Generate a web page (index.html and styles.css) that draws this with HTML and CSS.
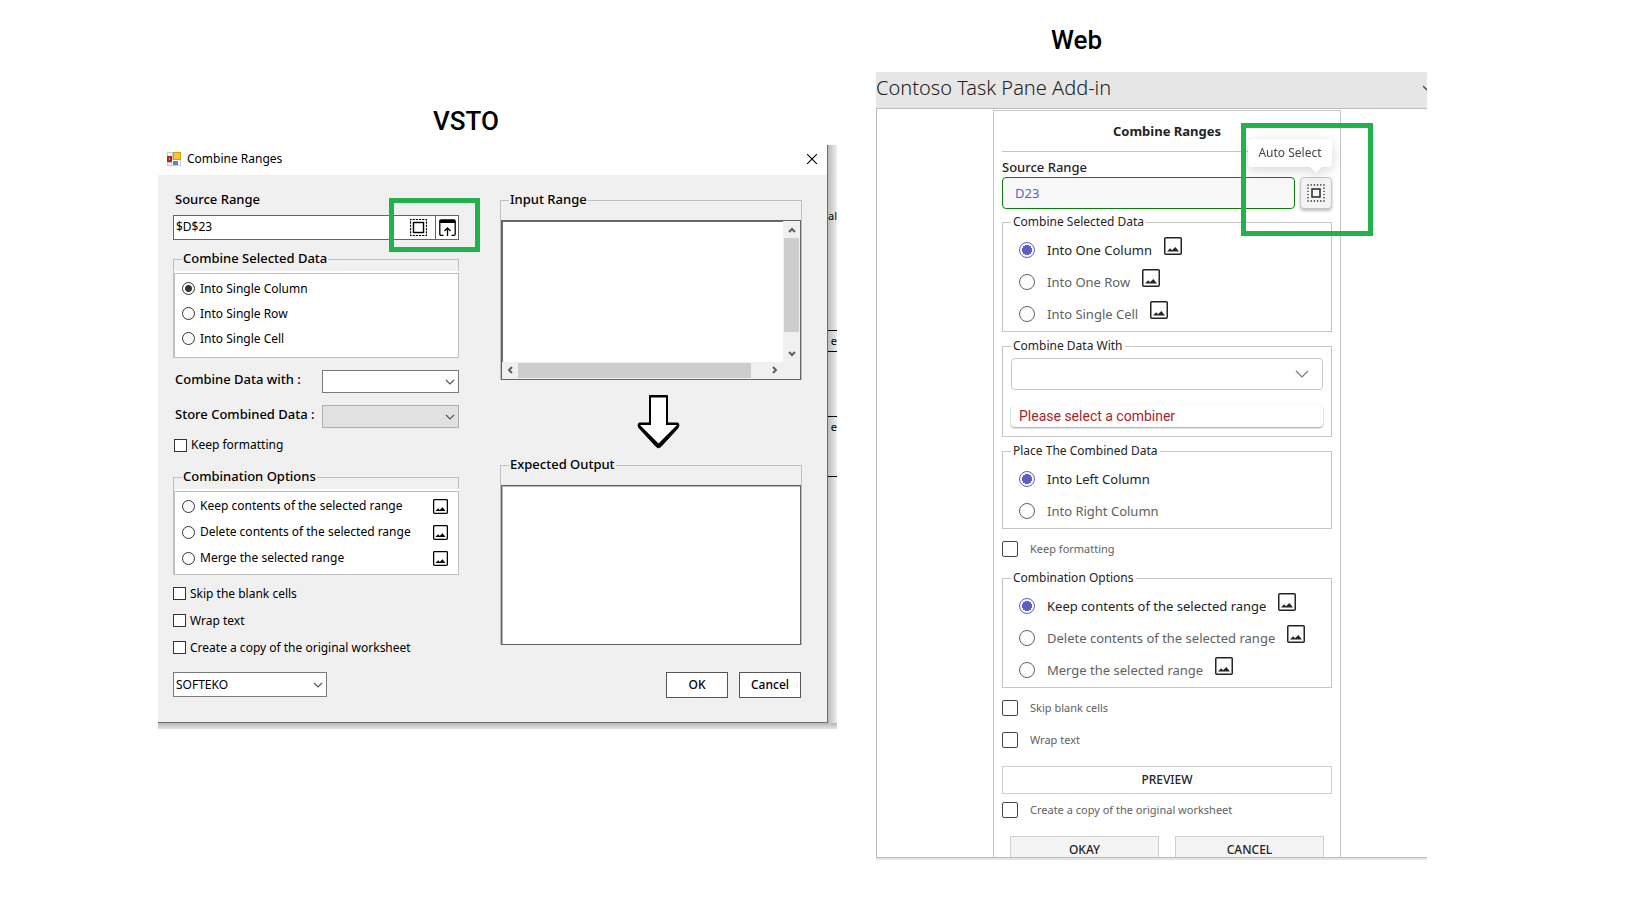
FILE: index.html
```html
<!DOCTYPE html>
<html lang="en">
<head>
<meta charset="utf-8">
<title>Combine Ranges</title>
<link rel="stylesheet" href="styles.css">
</head>
<body>
<svg width="0" height="0" class="defs" aria-hidden="true">
  <symbol id="picture" viewBox="0 0 18 18">
    <rect x="0.75" y="0.75" width="16.5" height="16.5" rx="1" fill="#fff" stroke="currentColor" stroke-width="1.5"/>
    <path d="M3 14.500 6.200 11.200 8 13.200 11.400 10 15 14.500Z" fill="currentColor"/>
  </symbol>
  <symbol id="chevron" viewBox="0 0 10 6">
    <path d="M1 1 5 5 9 1" fill="none" stroke="currentColor" stroke-width="1.2"/>
  </symbol>
  <symbol id="arrowhead" viewBox="0 0 8 6">
    <path d="M1 5 4 2 7 5" fill="none" stroke="#606060" stroke-width="2"/>
  </symbol>
</svg>
<main class="board">
  <section class="vsto">
    <h1 class="caption vsto-caption">VSTO</h1>
    <div class="desktop">
      <div class="window">
        <header class="titlebar">
          <svg class="app-icon" width="14" height="14" viewBox="0 0 14 14"><rect width="14" height="14" fill="#c9c9c9"/><rect x="1" y="1" width="4" height="3" fill="#fff"/><rect x="1" y="11" width="3" height="2" fill="#fff"/><rect x="5" y="8" width="8" height="5" fill="#fff"/><rect x="0" y="4" width="5" height="6" fill="#b3261c"/><rect x="2" y="6" width="1" height="2" fill="#f3a59b"/><rect x="6" y="0" width="8" height="8" fill="#d99b0b"/><rect x="7" y="1" width="6" height="6" fill="#fcc737"/><rect x="6" y="9" width="5" height="4" fill="#4f86e8"/></svg>
          <h2 class="titlebar-text">Combine Ranges</h2>
          <button class="close" aria-label="Close"><svg width="10" height="10" viewBox="0 0 10 10"><path d="M0 0 10 10M10 0 0 10" stroke="#000" stroke-width="1.1"/></svg></button>
        </header>
        <form class="window-body">
          <div class="settings">
            <label class="strong" for="src">Source Range</label>
            <div class="range-field">
              <input id="src" type="text" value="$D$23">
              <button type="button" class="range-btn" aria-label="Auto select"><svg width="17" height="17" viewBox="0 0 17 17" fill="none" stroke="#000"><rect x="0.5" y="0.5" width="16" height="16" stroke-width="1.200" stroke-dasharray="2.200 1" stroke-dashoffset="1.100"/><rect x="3.500" y="3.500" width="10" height="10" stroke-width="1.400"/></svg></button>
              <button type="button" class="range-btn divided" aria-label="Pick range"><svg width="17" height="17" viewBox="0 0 17 17" fill="none" stroke="#000" stroke-width="1.300"><path d="M4.500 16.300H2Q.8 16.300.8 15V2Q.8.8 2 .8H15Q16.200.8 16.200 2V15Q16.200 16.300 15 16.300H12.500M8.500 17V9M5.500 12 8.500 9 11.500 12"/><path d="M1 2.500H16" stroke-width="3"/></svg></button>
              <span class="marker"></span>
            </div>
            <fieldset class="group">
              <legend>Combine Selected Data</legend>
              <div class="panel">
                <label class="choice"><input type="radio" name="shape" checked>Into Single Column</label>
                <label class="choice"><input type="radio" name="shape">Into Single Row</label>
                <label class="choice"><input type="radio" name="shape">Into Single Cell</label>
              </div>
            </fieldset>
            <div class="pair">
              <label class="strong" for="with">Combine Data with :</label>
              <span class="drop"><select id="with"><option></option></select><svg width="10" height="6"><use href="#chevron"/></svg></span>
            </div>
            <div class="pair">
              <label class="strong" for="store">Store Combined Data :</label>
              <span class="drop"><select id="store" disabled><option></option></select><svg width="10" height="6"><use href="#chevron"/></svg></span>
            </div>
            <label class="tick keep"><input type="checkbox">Keep formatting</label>
            <fieldset class="group options">
              <legend>Combination Options</legend>
              <div class="panel">
                <label class="choice"><input type="radio" name="opt">Keep contents of the selected range<svg width="15" height="15"><use href="#picture"/></svg></label>
                <label class="choice"><input type="radio" name="opt">Delete contents of the selected range<svg width="15" height="15"><use href="#picture"/></svg></label>
                <label class="choice"><input type="radio" name="opt">Merge the selected range<svg width="15" height="15"><use href="#picture"/></svg></label>
              </div>
            </fieldset>
            <div class="ticks">
              <label class="tick"><input type="checkbox">Skip the blank cells</label>
              <label class="tick"><input type="checkbox">Wrap text</label>
              <label class="tick"><input type="checkbox">Create a copy of the original worksheet</label>
            </div>
            <span class="drop brand"><select aria-label="Brand"><option>SOFTEKO</option></select><svg width="10" height="6"><use href="#chevron"/></svg></span>
          </div>
          <div class="samples">
            <fieldset class="sample">
              <legend>Input Range</legend>
              <div class="sheet scrolled">
                <div class="sheet-page"></div>
                <div class="bar vertical"><svg width="8" height="6"><use href="#arrowhead"/></svg><i></i><svg class="down" width="8" height="6"><use href="#arrowhead"/></svg></div>
                <div class="bar horizontal"><svg class="left" width="8" height="6"><use href="#arrowhead"/></svg><i></i><svg class="right" width="8" height="6"><use href="#arrowhead"/></svg></div>
              </div>
            </fieldset>
            <svg class="arrow" width="43" height="54" viewBox="0 0 43 54"><path d="M12.500 .5H30.500V28H41Q43 30 41 33L24 51.500Q21.500 54 19 51.500L2 33Q0 30 2 28H12.500Z" fill="#000" stroke="#000" stroke-linejoin="round"/><path d="M14 2.500H29V30H40L21.500 48.500 3 30H14Z" fill="#fff"/></svg>
            <fieldset class="sample">
              <legend>Expected Output</legend>
              <div class="sheet"></div>
            </fieldset>
            <div class="actions">
              <button type="button">OK</button>
              <button type="button">Cancel</button>
            </div>
          </div>
        </form>
      </div>
      <div class="behind" aria-hidden="true">
        <span class="cell first">al</span>
        <span class="cell second">e</span>
        <span class="cell blank"></span>
        <span class="cell third">e</span>
      </div>
    </div>
  </section>

  <section class="web">
    <h1 class="caption web-caption">Web</h1>
    <div class="taskpane">
      <header class="taskpane-head">
        <h2>Contoso Task Pane Add-in</h2>
        <svg width="4" height="6" viewBox="0 0 4 6"><path d="M0 1 4 5" fill="none" stroke="#444" stroke-width="1.3"/></svg>
      </header>
      <div class="taskpane-body">
        <form class="pane">
          <h3>Combine Ranges</h3>
          <label class="pane-label" for="wsrc">Source Range</label>
          <div class="source">
            <input id="wsrc" type="text" value="D23">
            <button type="button" class="auto" aria-label="Auto Select"><svg width="18" height="18" viewBox="0 0 18 18" fill="none" stroke="#333"><rect x="1" y="1" width="16" height="16" stroke-width="1.300" stroke-dasharray="1.400 1.800" stroke-dashoffset="0.700"/><rect x="5" y="5" width="8" height="8" stroke-width="1.600"/></svg></button>
            <span class="tooltip" role="tooltip">Auto Select</span>
            <span class="marker"></span>
          </div>
          <fieldset class="box">
            <legend>Combine Selected Data</legend>
            <label class="radio"><input type="radio" name="wshape" checked><span>Into One Column</span><svg width="18" height="18"><use href="#picture"/></svg></label>
            <label class="radio"><input type="radio" name="wshape"><span>Into One Row</span><svg width="18" height="18"><use href="#picture"/></svg></label>
            <label class="radio"><input type="radio" name="wshape"><span>Into Single Cell</span><svg width="18" height="18"><use href="#picture"/></svg></label>
          </fieldset>
          <fieldset class="box">
            <legend>Combine Data With</legend>
            <span class="combiner"><select aria-label="Combine Data With"><option></option></select><svg width="14" height="8" viewBox="0 0 14 8"><path d="M1 1 7 7 13 1" fill="none" stroke="#777" stroke-width="1.200"/></svg></span>
            <p class="error">Please select a combiner</p>
          </fieldset>
          <fieldset class="box">
            <legend>Place The Combined Data</legend>
            <label class="radio"><input type="radio" name="wplace" checked><span>Into Left Column</span></label>
            <label class="radio"><input type="radio" name="wplace"><span>Into Right Column</span></label>
          </fieldset>
          <label class="check"><input type="checkbox">Keep formatting</label>
          <fieldset class="box">
            <legend>Combination Options</legend>
            <label class="radio"><input type="radio" name="wopt" checked><span>Keep contents of the selected range</span><svg width="18" height="18"><use href="#picture"/></svg></label>
            <label class="radio"><input type="radio" name="wopt"><span>Delete contents of the selected range</span><svg width="18" height="18"><use href="#picture"/></svg></label>
            <label class="radio"><input type="radio" name="wopt"><span>Merge the selected range</span><svg width="18" height="18"><use href="#picture"/></svg></label>
          </fieldset>
          <label class="check"><input type="checkbox">Skip blank cells</label>
          <label class="check"><input type="checkbox">Wrap text</label>
          <button type="button" class="preview">PREVIEW</button>
          <label class="check"><input type="checkbox">Create a copy of the original worksheet</label>
          <div class="pane-actions">
            <button type="button">OKAY</button>
            <button type="button">CANCEL</button>
          </div>
        </form>
      </div>
    </div>
  </section>
</main>
</body>
</html>
```

FILE: styles.css
```css
* { box-sizing: border-box; }

body {
  margin: 0;
  background: #fff;
  color: #000;
  font: 12px/16px "Noto Sans", "Open Sans", sans-serif;
}

h1, h2, h3, p { margin: 0; font-weight: inherit; }
button, input, select { font: inherit; color: inherit; margin: 0; border-radius: 0; }
svg { display: block; flex: none; }
fieldset { min-width: 0; margin: 0; }
.defs { position: absolute; }

.board {
  display: grid;
  grid-template-columns: 679fr 551fr;
  gap: 39px;
  align-items: start;
  padding: 24px 211px 48px 158px;
}

.caption { font: 500 26px/32px Roboto, sans-serif; }
.vsto-caption { padding: 81px 0 8px 275px; box-sizing: content-box; }
.web-caption { padding: 0 0 16px 175px; }

.marker {
  position: absolute;
  border: 5px solid #22b14c;
  pointer-events: none;
}

/* Desktop dialog */
.desktop {
  display: grid;
  grid-template-columns: 1fr 9px;
  padding-bottom: 6px;
  background: linear-gradient(#b8b8b8, #e4e4e4) bottom / 100% 6px no-repeat;
}
.window { border: solid #6b6e6e; border-width: 0 1px 1px 0; }

.titlebar { display: flex; align-items: center; height: 30px; padding: 0 10px 2px 9px; background: #fff; }
.titlebar-text { flex: 1; padding-left: 6px; font-size: 12px; line-height: 16px; }
.close { padding: 0; border: 0; background: none; }

.window-body {
  display: grid;
  grid-template-columns: 286fr 302fr;
  gap: 41px;
  padding: 17px 25px 24px 15px;
  background: #f0f0f0;
}
.settings, .samples { display: flex; flex-direction: column; }
.strong, .group legend, .sample legend { font-weight: 500; font-size: 13px; line-height: 14px; }
.settings > .strong { padding: 0 0 2px 2px; }

.range-field {
  position: relative;
  display: flex;
  height: 25px;
  margin: 7px 0 11px;
  border: 1px solid #646464;
  background: #fff;
}
.range-field input { flex: 1; min-width: 0; padding: 0 2px 2px; border: 0; background: none; }
.range-btn { display: grid; place-items: center; padding: 0 8px 0 7px; border: 0; background: none; }
.range-btn.divided { padding: 0 2px 0 3px; border-left: 1px solid #646464; }
.range-field .marker { top: -18px; right: -22px; width: 91px; height: 54px; }

.group, .sample { padding: 0; border: 1px solid #bfbfbf; border-bottom: 0; }
.group legend, .sample legend { margin-left: 8px; padding: 0 1px 2px; }
.panel {
  margin: 6px -1px 0 0;
  padding: 2px 10px 6px 7px;
  border: 1px solid #bfbfbf;
  background: #fff;
  box-shadow: 0 -2px #fff;
}
.choice { display: flex; align-items: center; gap: 5px; height: 25px; }
.choice svg { margin-left: auto; }
.options .panel { padding: 1px 10px 3px 7px; }
.options .choice { height: 26px; }
.choice input {
  appearance: none;
  width: 13px;
  height: 13px;
  border: 1px solid #333;
  border-radius: 50%;
  background: #fff;
}
.choice input:checked { background: radial-gradient(circle, #333 0 3px, #fff 4px); }

.pair {
  display: grid;
  grid-template-columns: 149fr 137fr;
  height: 23px;
  margin-top: 12px;
}
.pair label { padding: 2px 0 0 2px; white-space: nowrap; }
.drop { display: grid; align-items: center; }
.drop select {
  grid-area: 1 / 1;
  appearance: none;
  width: 100%;
  height: 100%;
  padding: 0 2px;
  border: 1px solid #7a7a7a;
  background: #fff;
}
.drop select:disabled { border-color: #adadad; background: #e1e1e1; opacity: 1; }
.drop svg { grid-area: 1 / 1; justify-self: end; margin-right: 4px; color: #555; pointer-events: none; }
.brand { width: 154px; height: 25px; margin-top: 11px; }

.tick { display: flex; align-items: center; gap: 4px; height: 27px; }
.tick input { appearance: none; width: 13px; height: 13px; border: 1px solid #333; background: #fff; }
.keep { height: 18px; margin: 8px 0 15px; padding-left: 1px; }
.ticks { margin-top: 5px; }

.sheet {
  height: 160px;
  margin-top: 12px;
  border: 1px solid #646464;
  background: #fff;
  box-shadow: inset 1px 1px #b4b4b4;
}
.scrolled {
  display: grid;
  grid-template-columns: 1fr 17px;
  grid-template-rows: 1fr 17px;
  background: #f0f0f0;
  box-shadow: none;
}
.sheet-page { border: solid #696969; border-width: 1px 0 0 1px; background: #fff; }
.bar { display: flex; align-items: center; justify-content: space-between; padding: 0 1px 1px; }
.bar i { flex: 1; background: #cdcdcd; }
.vertical { flex-direction: column; padding: 6px 1px 5px; }
.vertical i { width: 15px; margin: 5px 0 19px; }
.horizontal i { height: 15px; margin: 0 20px 0 4px; }
.horizontal { padding: 0 4px 1px 4px; }
.down { transform: rotate(180deg); }
.left { transform: rotate(-90deg); }
.right { transform: rotate(90deg); }

.arrow { margin: 15px 0 8px 137px; }
.actions { display: flex; justify-content: flex-end; gap: 11px; margin-top: 27px; padding-right: 1px; }
.actions button { width: 62px; height: 26px; padding: 0; border: 1px solid #555; background: #fff; font-weight: 500; }

.behind {
  display: flex;
  flex-direction: column;
  align-items: stretch;
  background: linear-gradient(90deg, #bbb, #eee);
  font-size: 11px;
}
.cell { display: block; text-align: right; border-bottom: 1px solid #000; }
.first { height: 186px; padding-top: 63px; border-bottom-color: #000; }
.second { height: 21px; padding-top: 2px; }
.blank { height: 65px; }
.third { height: 60px; padding-top: 2px; }

/* Task pane */
.taskpane { border-bottom: 2px solid #e4e4e4; }
.taskpane-head {
  display: flex;
  align-items: center;
  justify-content: space-between;
  height: 37px;
  padding-bottom: 4px;
  border-bottom: 1px solid #bdbdbd;
  background: #e6e6e6;
  color: #444;
}
.taskpane-head h2 { font-size: 20px; line-height: 28px; font-weight: 300; color: #222; }
.taskpane-body {
  padding: 1px 86px 0 116px;
  border: solid #bdbdbd;
  border-width: 0 0 1px 1px;
}
.pane {
  display: flex;
  flex-direction: column;
  padding: 0 8px;
  border: 1px solid #c6c6c6;
  border-bottom: 0;
  color: #242424;
}
.pane h3 {
  border-bottom: 1px solid #c6c6c6;
  font-size: 13px;
  line-height: 40px;
  font-weight: 700;
  text-align: center;
}
.pane-label { padding: 6px 0 1px; font-size: 13px; line-height: 18px; font-weight: 500; }

.source { position: relative; display: flex; gap: 5px; height: 32px; margin-bottom: 5px; }
.source input {
  flex: 1;
  min-width: 0;
  padding: 0 12px;
  border: 1px solid #107c10;
  border-radius: 4px;
  background: #f8f8f8;
  color: #5b5fc7;
  font-size: 13px;
}
.auto {
  display: grid;
  place-items: center;
  width: 32px;
  padding: 0;
  border: 1px solid #c7c7c7;
  border-radius: 4px;
  background: #f4f4f4;
  box-shadow: 0 2px 3px rgba(0, 0, 0, .25);
}
.tooltip {
  position: absolute;
  right: 0;
  top: -38px;
  width: 84px;
  border-radius: 4px;
  background: #fff;
  color: #484644;
  line-height: 28px;
  text-align: center;
  white-space: nowrap;
  filter: drop-shadow(0 3px 6px rgba(0, 0, 0, .16));
}
.tooltip::after {
  content: "";
  position: absolute;
  right: 10px;
  top: 100%;
  border: 6px solid transparent;
  border-top-color: #fff;
  border-bottom: 0;
}
.source .marker { top: -54px; right: -41px; width: 132px; height: 113px; }

.box { padding: 4px 8px 1px; border: 1px solid #c6c6c6; }
.box + .box { margin-top: 6px; }
.box legend { padding: 0 2px; font-weight: 400; }
.radio {
  display: flex;
  align-items: center;
  gap: 12px;
  height: 32px;
  padding-left: 8px;
  color: #616161;
  font-size: 13px;
}
.radio svg { margin-bottom: 8px; color: #242424; }
.radio:has(:checked) { color: #242424; }
.radio input {
  appearance: none;
  width: 16px;
  height: 16px;
  border: 1px solid #616161;
  border-radius: 50%;
}
.radio input:checked { border-color: #5b5fc7; background: radial-gradient(circle, #5b5fc7 0 5px, #fff 5px); }

.combiner { display: grid; align-items: center; height: 32px; }
.combiner select {
  grid-area: 1 / 1;
  appearance: none;
  height: 100%;
  border: 1px solid #c7c7c7;
  border-radius: 4px;
  background: #fff;
}
.combiner svg { grid-area: 1 / 1; justify-self: end; margin-right: 14px; pointer-events: none; }
.error {
  margin: 15px 0 8px;
  padding: 0 8px;
  border-radius: 4px;
  box-shadow: 0 1px 2px rgba(0, 0, 0, .4);
  color: #a4262c;
  font: 14px/22px Roboto, sans-serif;
}

.check { display: flex; align-items: center; gap: 12px; height: 32px; color: #616161; font-size: 11px; }
.box + .check { margin-top: 4px; }
.check + .box { margin-top: 5px; }
.check input { appearance: none; width: 16px; height: 16px; border: 1px solid #484644; border-radius: 2px; }

.preview { height: 28px; margin-top: 10px; border: 1px solid #cfcfcf; background: #fff; font-weight: 500; }
.pane-actions { display: flex; gap: 16px; height: 21px; margin-top: 10px; padding: 0 8px; overflow: hidden; }
.pane-actions button { flex: 1; height: 28px; border: 1px solid #cfcfcf; background: #f4f4f4; font-weight: 500; }
```
